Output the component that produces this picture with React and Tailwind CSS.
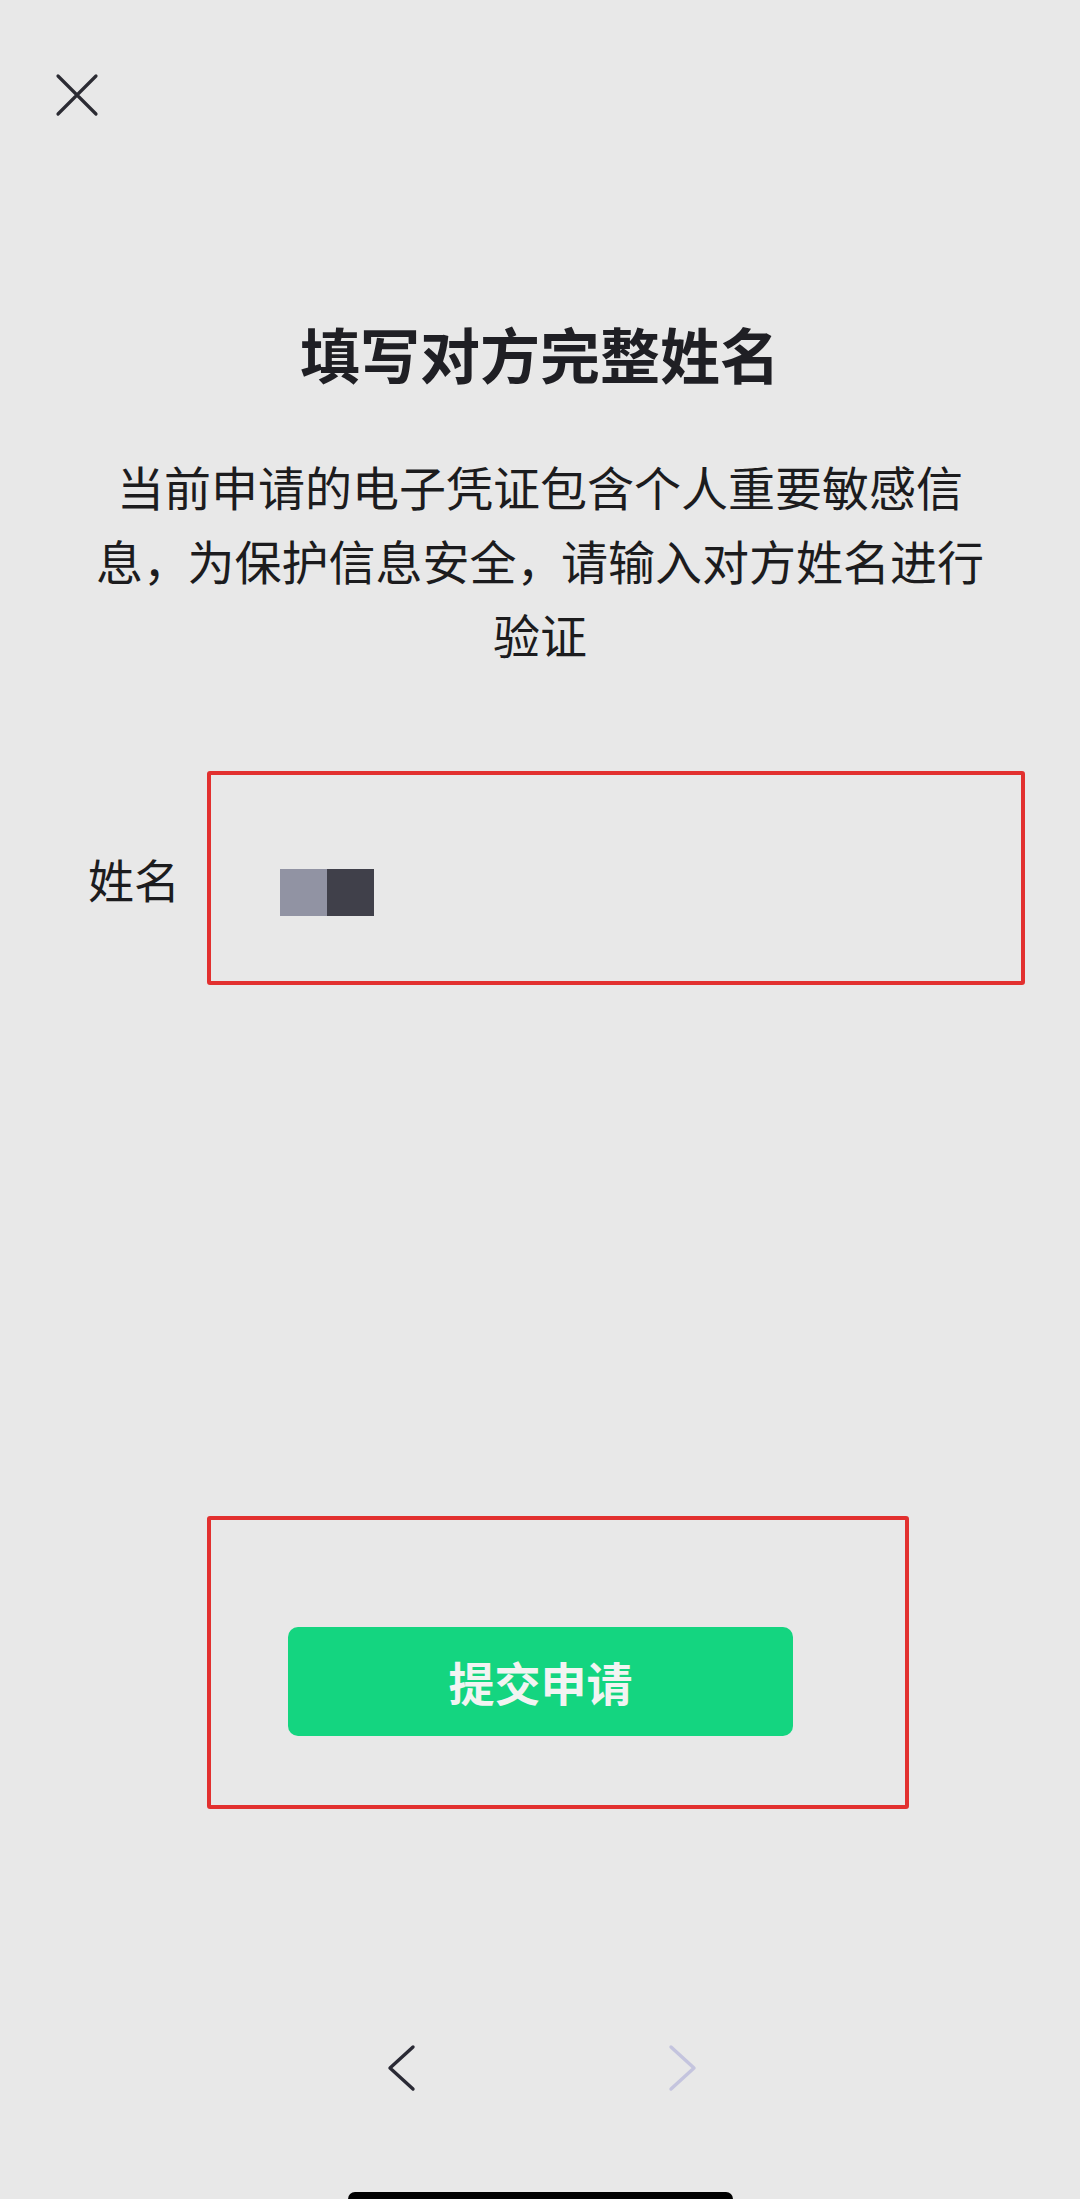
export default function App() {
  const comma = <span className="[font-feature-settings:'halt'] mr-[21px]">，</span>;
  return (
    <div className="w-[1080px] h-[2199px] bg-[#e8e8e8] overflow-hidden flex flex-col font-['Noto_Sans_CJK_SC','Noto_Sans',sans-serif]">
      {/* close button */}
      <div className="pl-[54px] pt-[72px]">
        <svg width="46" height="46" viewBox="0 0 46 46" fill="none">
          <path d="M4 4 L42 42 M42 4 L4 42" stroke="#2b2b33" strokeWidth="3.2" strokeLinecap="round" />
        </svg>
      </div>

      <h1 className="mt-[199px] text-center text-[60px] leading-[72px] font-semibold text-[#1f1f24]">
        填写对方完整姓名
      </h1>

      <p className="mt-[60px] text-center text-[47px] leading-[74px] text-[#1c1c1e]">
        当前申请的电子凭证包含个人重要敏感信
        <br />
        息{comma}为保护信息安全{comma}请输入对方姓名进行
        <br />
        验证
      </p>

      {/* name field */}
      <div className="mt-[100px] flex items-center">
        <label className="w-[207px] pl-[88px] text-[46px] leading-[56px] text-[#1c1c1e]">姓名</label>
        <div className="w-[818px] h-[214px] border-4 border-[#e2302f] rounded-[3px] flex items-center pl-[69px] pt-[29px]">
          <div className="flex">
            <div className="w-[47px] h-[47px] bg-[#9193a3]" />
            <div className="w-[47px] h-[47px] bg-[#40404a]" />
          </div>
        </div>
      </div>

      {/* submit area */}
      <div className="mt-[531px] ml-[207px] w-[702px] h-[293px] border-4 border-[#e2302f] rounded-[3px] pl-[77px] pt-[107px]">
        <button className="w-[505px] h-[109px] rounded-[10px] bg-[#14d580] text-[#f2f4f2] text-[46px] font-bold flex items-center justify-center">
          提交申请
        </button>
      </div>

      {/* page navigation */}
      <div className="mt-[235px] flex">
        <div className="ml-[386px]">
          <svg width="30" height="48" viewBox="0 0 30 48" fill="none">
            <path d="M27 3 L4 24 L27 45" stroke="#2a2a35" strokeWidth="3.4" strokeLinecap="round" strokeLinejoin="round" />
          </svg>
        </div>
        <div className="ml-[252px]">
          <svg width="30" height="48" viewBox="0 0 30 48" fill="none">
            <path d="M3 3 L26 24 L3 45" stroke="#c4c4de" strokeWidth="3.4" strokeLinecap="round" strokeLinejoin="round" />
          </svg>
        </div>
      </div>

      {/* home indicator */}
      <div className="mt-auto ml-[348px] w-[385px] h-[7px] bg-black rounded-t-[7px]" />
    </div>
  );
}
